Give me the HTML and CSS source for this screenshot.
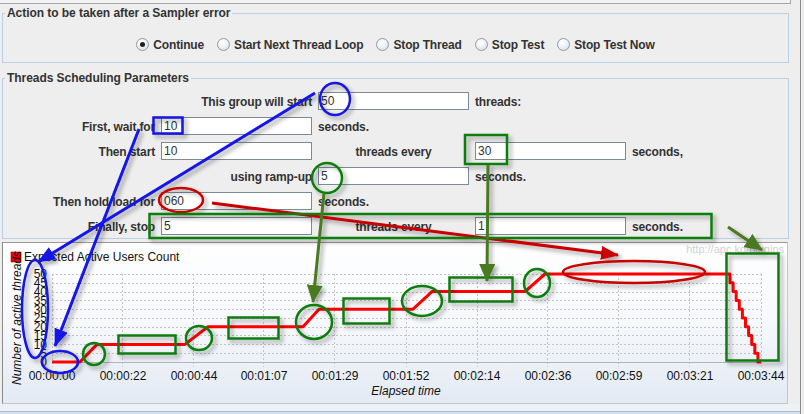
FILE: index.html
```html
<!DOCTYPE html>
<html>
<head>
<meta charset="utf-8">
<title>Thread Group</title>
<link rel="stylesheet" href="styles.css">
</head>
<body>
<div class="frame">
  <div class="topstrip"></div>

  <fieldset class="group group-action">
    <legend>Action to be taken after a Sampler error</legend>
    <div class="radios">
      <span class="opt"><span class="radio on"></span>Continue</span>
      <span class="opt"><span class="radio"></span>Start Next Thread Loop</span>
      <span class="opt"><span class="radio"></span>Stop Thread</span>
      <span class="opt"><span class="radio"></span>Stop Test</span>
      <span class="opt"><span class="radio"></span>Stop Test Now</span>
    </div>
  </fieldset>

  <fieldset class="group group-sched">
    <legend>Threads Scheduling Parameters</legend>
    <div class="sched">
      <span class="lbl wide">This group will start</span>
      <input class="field c3" value="50">
      <span class="txt c4">threads:</span>

      <span class="lbl">First, wait for</span>
      <input class="field c2" value="10">
      <span class="txt c3">seconds.</span>

      <span class="lbl">Then start</span>
      <input class="field c2" value="10">
      <span class="txt c3 mid">threads every</span>
      <input class="field c4" value="30">
      <span class="txt c5">seconds,</span>

      <span class="lbl wide">using ramp-up</span>
      <input class="field c3" value="5">
      <span class="txt c4">seconds.</span>

      <span class="lbl">Then hold load for</span>
      <input class="field c2" value="060">
      <span class="txt c3">seconds.</span>

      <span class="lbl">Finally, stop</span>
      <input class="field c2" value="5">
      <span class="txt c3 mid">threads every</span>
      <input class="field c4" value="1">
      <span class="txt c5">seconds.</span>
    </div>
  </fieldset>

  <div class="chart">
    <svg class="plot" width="784" height="160" viewBox="3 243 784 160">
      <rect x="11" y="252" width="10" height="10" fill="#ee0000" stroke="#b00000" stroke-width="0.6"/>
      <text class="legend-text" x="24" y="261">Expected Active Users Count</text>
      <text class="watermark" x="784" y="253" text-anchor="end">http://apc.kg/plugins</text>

      <path class="grid" d="M52 353.5H761M52 344.5H761M52 335.5H761M52 327.5H761M52 318.5H761M52 309.5H761M52 300.5H761M52 292.5H761M52 283.5H761M52 274.5H761"/>
      <path class="grid" d="M52.5 274V367M122.5 274V367M193.5 274V367M263.5 274V367M334.5 274V367M406.5 274V367M477.5 274V367M547.5 274V367M618.5 274V367M689.5 274V367M761.5 274V367"/>
      <path class="axis" d="M52 362.5H762"/>

      <g class="ylab" text-anchor="end">
        <text x="47" y="366.3">0</text>
        <text x="47" y="357.5">5</text>
        <text x="47" y="348.7">10</text>
        <text x="47" y="339.9">15</text>
        <text x="47" y="331.1">20</text>
        <text x="47" y="322.3">25</text>
        <text x="47" y="313.5">30</text>
        <text x="47" y="304.7">35</text>
        <text x="47" y="295.9">40</text>
        <text x="47" y="287.1">45</text>
        <text x="47" y="278.3">50</text>
      </g>
      <g class="xlab" text-anchor="middle">
        <text x="52" y="380">00:00:00</text>
        <text x="123" y="380">00:00:22</text>
        <text x="194" y="380">00:00:44</text>
        <text x="264" y="380">00:01:07</text>
        <text x="335" y="380">00:01:29</text>
        <text x="406" y="380">00:01:52</text>
        <text x="477" y="380">00:02:14</text>
        <text x="548" y="380">00:02:36</text>
        <text x="619" y="380">00:02:59</text>
        <text x="690" y="380">00:03:21</text>
        <text x="761" y="380">00:03:44</text>
      </g>
      <text class="axis-title" x="406" y="395" text-anchor="middle">Elapsed time</text>
      <text class="axis-title" transform="translate(21 318) rotate(-90)" text-anchor="middle">Number of active threads</text>

      <polyline class="series" points="52,362 80,362 97,344.4 185,344.4 208,326.8 303,326.8 319,309.2 413,309.2 432,291.6 525,291.6 545,274 730,274 730,282.8 733.1,282.8 733.1,291.6 736.2,291.6 736.2,300.4 739.3,300.4 739.3,309.2 742.4,309.2 742.4,318 745.5,318 745.5,326.8 748.6,326.8 748.6,335.6 751.7,335.6 751.7,344.4 754.8,344.4 754.8,353.2 757.9,353.2 757.9,362 761,362"/>
    </svg>
  </div>

  <div class="bottom"></div>
  <div class="base"></div>
</div>

<svg class="annot" width="804" height="414" viewBox="0 0 804 414">
  <defs>
    <filter id="sh" filterUnits="userSpaceOnUse" x="0" y="0" width="804" height="414">
      <feDropShadow dx="3" dy="3" stdDeviation="2" flood-color="#000" flood-opacity="0.35"/>
    </filter>
    <marker id="mb" viewBox="0 0 18 14" refX="17" refY="7" markerWidth="18" markerHeight="14" markerUnits="userSpaceOnUse" orient="auto">
      <path d="M0 0L18 7L0 14z" fill="#1414e6"/>
    </marker>
    <marker id="mr" viewBox="0 0 18 14" refX="17" refY="7" markerWidth="18" markerHeight="14" markerUnits="userSpaceOnUse" orient="auto">
      <path d="M0 0L18 7L0 14z" fill="#c80000"/>
    </marker>
    <marker id="mg" viewBox="0 0 18 16" refX="17" refY="8" markerWidth="18" markerHeight="16" markerUnits="userSpaceOnUse" orient="auto">
      <path d="M0 0L18 8L0 16z" fill="#4a7a22"/>
    </marker>
  </defs>
  <g filter="url(#sh)" fill="none" stroke-width="2.5">
    <!-- blue -->
    <g stroke="#1414e6">
      <ellipse cx="335" cy="99" rx="15" ry="16"/>
      <rect x="153.5" y="117.5" width="29" height="16"/>
      <ellipse cx="35" cy="309" rx="13" ry="49"/>
      <ellipse cx="60" cy="362" rx="18" ry="11"/>
      <line x1="315" y1="93" x2="38" y2="262" stroke-width="3" marker-end="url(#mb)"/>
      <line x1="139" y1="129" x2="55" y2="346" stroke-width="3" marker-end="url(#mb)"/>
    </g>
    <!-- red -->
    <g stroke="#c80000">
      <ellipse cx="181" cy="200" rx="22" ry="12"/>
      <ellipse cx="634" cy="272" rx="71" ry="11"/>
      <line x1="212" y1="203" x2="618" y2="255" stroke-width="3" marker-end="url(#mr)"/>
    </g>
    <!-- green shapes -->
    <g stroke="#0b7d0b">
      <rect x="465" y="135" width="42" height="29"/>
      <ellipse cx="327" cy="178" rx="15" ry="15"/>
      <rect x="149.5" y="214" width="562" height="24"/>
      <rect x="726.5" y="253.5" width="52" height="107"/>
      <ellipse cx="94" cy="354" rx="11" ry="11"/>
      <ellipse cx="199" cy="338" rx="13" ry="12"/>
      <ellipse cx="314" cy="322" rx="18" ry="17"/>
      <ellipse cx="422" cy="301" rx="20" ry="15"/>
      <ellipse cx="537" cy="283" rx="13" ry="14"/>
      <rect x="118.5" y="335.5" width="57" height="18"/>
      <rect x="228.5" y="317.5" width="50" height="21"/>
      <rect x="343.5" y="298.5" width="46" height="25"/>
      <rect x="449.5" y="277.5" width="63" height="24"/>
    </g>
    <!-- green arrows -->
    <g stroke="#4a7a22" stroke-width="3">
      <line x1="488" y1="165" x2="487" y2="281" marker-end="url(#mg)"/>
      <line x1="324" y1="193" x2="313" y2="302" marker-end="url(#mg)"/>
      <line x1="728" y1="227" x2="762" y2="250" marker-end="url(#mg)"/>
    </g>
  </g>
</svg>
</body>
</html>
```

FILE: styles.css
```css
* {
  box-sizing: border-box;
}

html,
body {
  margin: 0;
  padding: 0;
}

body {
  position: relative;
  width: 804px;
  height: 414px;
  overflow: hidden;
  background: #eeeeee;
  font: bold 12px "Liberation Sans", Arial, sans-serif;
  color: #333333;
}

.frame {
  width: 801px;
  height: 414px;
  padding-left: 2px;
  border-right: 1px solid #8c8c8c;
}

.topstrip {
  margin-left: -2px;
  width: 791px;
  height: 4px;
  background: #f3f3f3;
  border-right: 1px solid #a6a6a6;
  border-bottom: 1px solid #a6a6a6;
}

/* titled groups */
.group {
  margin: 0;
  padding: 0;
  min-width: 0;
  width: 787px;
  border: 1px solid #b8cfe5;
}

.group legend {
  margin-left: 2px;
  padding: 0 2px;
  line-height: 15px;
  font-weight: bold;
  color: #333333;
  letter-spacing: -0.05px;
}

.group-action {
  margin-top: 2px;
  padding: 15px 0 10px;
}

.group-sched {
  margin-top: 8px;
  padding: 6px 0 3px;
}

/* radio buttons */
.radios {
  display: flex;
  justify-content: center;
  align-items: center;
  gap: 13px;
  height: 16px;
}

.opt {
  display: flex;
  align-items: center;
  gap: 4px;
  line-height: 16px;
  padding-top: 1px;
  letter-spacing: -0.15px;
}

.radio {
  display: grid;
  place-items: center;
  width: 13px;
  height: 13px;
  margin-top: -1px;
  border-radius: 50%;
  border: 1px solid #8f9cab;
  background: radial-gradient(circle at 40% 35%, #ffffff 0%, #eef2f7 45%, #c9d4df 100%);
}

.radio.on::after {
  content: "";
  width: 5px;
  height: 5px;
  border-radius: 50%;
  background: #1e1e1e;
}

/* scheduling grid */
.sched {
  display: grid;
  grid-template-columns: 152px 151px 151px 151px auto;
  grid-auto-rows: 18px;
  column-gap: 6px;
  row-gap: 7px;
  align-items: center;
}

.lbl,
.txt {
  line-height: 16px;
  padding-top: 2px;
  white-space: nowrap;
  letter-spacing: -0.15px;
}

.lbl {
  grid-column: 1;
  justify-self: end;
}

.lbl.wide {
  grid-column: 1 / 3;
}

.c2 { grid-column: 2; }
.c3 { grid-column: 3; }
.c4 { grid-column: 4; }
.c5 { grid-column: 5; }

.mid {
  justify-self: center;
}

.field {
  width: 151px;
  height: 18px;
  margin: 0;
  padding: 0 2px;
  border: 1px solid #7a8a99;
  background: #ffffff;
  font: 12px "Liberation Sans", Arial, sans-serif;
  color: #333333;
  outline: none;
}

/* chart */
.chart {
  margin-top: 3px;
  width: 786px;
  height: 162px;
  border: 1px solid;
  border-color: #9a9a9a #c6c6c6 #c6c6c6 #8a8a8a;
  background: linear-gradient(#ffffff 0%, #f6f8fb 50%, #e3eaf4 100%);
}

.plot {
  display: block;
  font-family: "Liberation Sans", Arial, sans-serif;
  font-weight: normal;
  font-size: 12px;
}

.plot text {
  fill: #111111;
}

.plot .watermark {
  fill: #d2d2d2;
  font-size: 11px;
}

.plot .axis-title {
  font-style: italic;
}

.grid {
  fill: none;
  stroke: #c4c4c4;
  stroke-width: 1;
  stroke-dasharray: 2 2;
}

.axis {
  fill: none;
  stroke: #b4b4b4;
  stroke-width: 1;
}

.series {
  fill: none;
  stroke: #ff0000;
  stroke-width: 3;
  stroke-linejoin: round;
}

.bottom {
  margin-left: -2px;
  width: 800px;
  height: 8px;
  background: #eef1f5;
  border-bottom: 1px solid #a9bdd2;
}

.base {
  margin-left: -2px;
  width: 800px;
  height: 2px;
  background: #d3e0ee;
}

/* annotation overlay drawn on top of the screenshot */
.annot {
  position: absolute;
  left: 0;
  top: 0;
  pointer-events: none;
}
```
